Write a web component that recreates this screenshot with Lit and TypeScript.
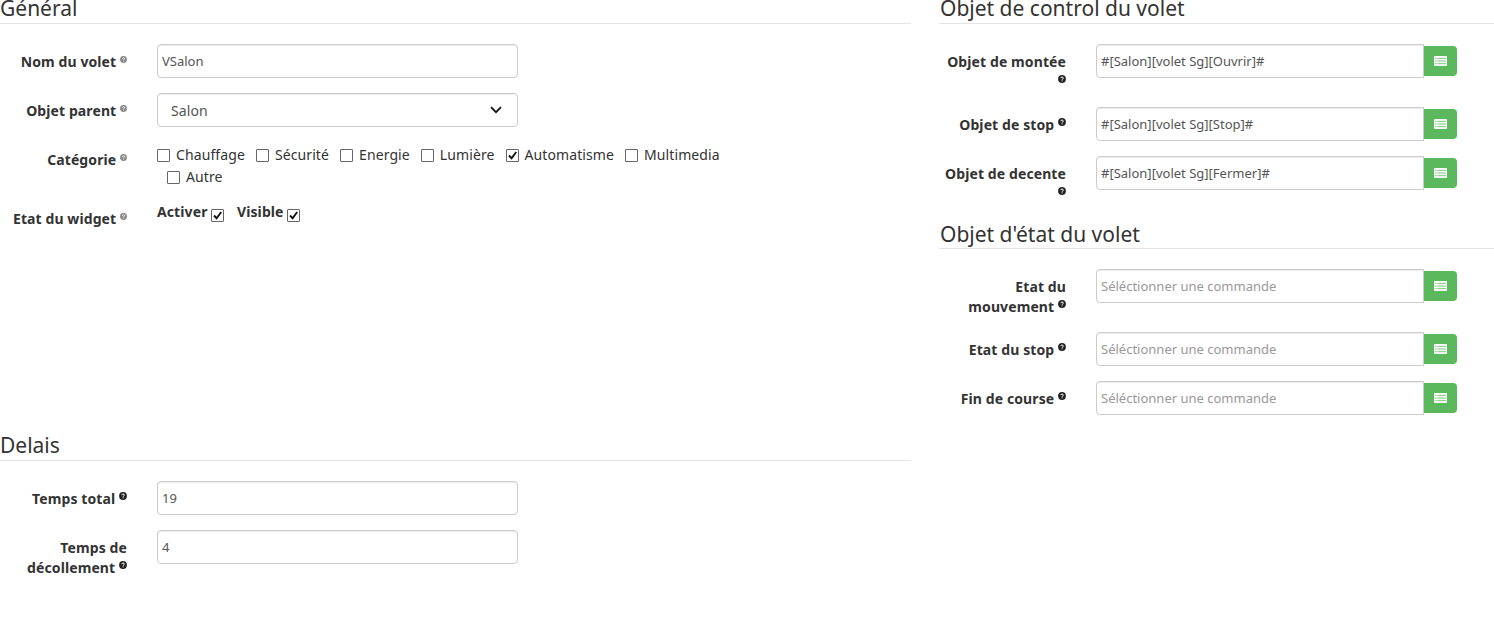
import { LitElement, html, css, svg } from "lit";
import { customElement } from "lit/decorators.js";

const help = (faint = false) => html`<svg class="help ${faint ? "faint" : ""}" viewBox="0 0 16 16" aria-hidden="true">
  <circle cx="8" cy="8" r="7.8" fill="currentColor"></circle>
  ${svg`<path d="M5.4 6.2c.2-1.5 1.3-2.2 2.7-2.2 1.5 0 2.6.9 2.6 2.1 0 1.9-2.5 1.8-2.5 3.5" fill="none" stroke="#fff" stroke-width="2"></path>`}
  <rect x="7.1" y="10.7" width="2" height="2" fill="#fff"></rect>
</svg>`;

const listAlt = html`<svg class="list" viewBox="0 0 13 10" aria-hidden="true">
  <rect width="13" height="10" rx="1" fill="#fff"></rect>
  <g fill="#7cc67c">
    <rect x="1" y="1.8" width="1.6" height="1"></rect>
    <rect x="3.4" y="1.8" width="8.6" height="1"></rect>
    <rect x="1" y="4.5" width="1.6" height="1"></rect>
    <rect x="3.4" y="4.5" width="8.6" height="1"></rect>
    <rect x="1" y="7.2" width="1.6" height="1"></rect>
    <rect x="3.4" y="7.2" width="8.6" height="1"></rect>
  </g>
</svg>`;

@customElement("app-root")
export class AppRoot extends LitElement {
  static styles = css`
    :host {
      display: block;
      width: 1494px;
      height: 620px;
      overflow: hidden;
      background: #fff;
      color: #333;
      font-family: "Noto Sans", "Open Sans", sans-serif;
      font-size: 14px;
      line-height: 20px;
    }
    .page {
      display: grid;
      grid-template-columns: 911px 555px;
      column-gap: 28px;
      margin-top: -7px;
    }
    h2 {
      margin: 0 0 20px;
      height: 30px;
      font-size: 21px;
      line-height: 30px;
      font-weight: 400;
      color: #333;
      border-bottom: 1px solid #e5e5e5;
      box-sizing: content-box;
      white-space: nowrap;
    }
    .right h2 {
      padding-left: 1px;
    }
    .right section + section h2 {
      height: 29px;
    }
    .general {
      height: 437px;
    }
    .row {
      display: grid;
      grid-template-columns: 127px 1fr;
      column-gap: 30px;
      margin-bottom: 15px;
    }
    label.name {
      padding-top: 8px;
      text-align: right;
      font-weight: 700;
      letter-spacing: 0.1px;
    }
    .help {
      display: inline-block;
      width: 8px;
      height: 8px;
      vertical-align: 4px;
      color: #222;
    }
    .help.faint {
      width: 7px;
      height: 7px;
      color: #888;
      vertical-align: 4px;
    }
    input.text,
    select {
      display: block;
      box-sizing: border-box;
      width: 361px;
      height: 34px;
      padding: 6px 4px;
      border: 1px solid #ccc;
      border-radius: 4px;
      background: #fff;
      box-shadow: inset 0 1px 1px rgba(0, 0, 0, 0.075);
      color: #555;
      font: 400 13px/20px "Noto Sans", "Open Sans", sans-serif;
      outline: none;
    }
    input.text::placeholder {
      color: #999;
      opacity: 1;
    }
    select {
      appearance: none;
      padding: 7px 13px 5px;
      font-size: 14px;
      letter-spacing: 0.1px;
      background-image: url("data:image/svg+xml,%3Csvg xmlns='http://www.w3.org/2000/svg' width='12' height='8' viewBox='0 0 12 8'%3E%3Cpath d='M1 1.2l5 5 5-5' fill='none' stroke='%23111' stroke-width='1.8'/%3E%3C/svg%3E");
      background-repeat: no-repeat;
      background-position: right 15px center;
    }
    .group {
      display: flex;
      align-items: flex-start;
    }
    .group input.text {
      width: 328px;
      border-radius: 4px 0 0 4px;
    }
    .btn {
      display: flex;
      align-items: center;
      justify-content: center;
      box-sizing: border-box;
      width: 33px;
      height: 30px;
      margin-top: 2px;
      padding: 0;
      border: none;
      border-radius: 0 4px 4px 0;
      background: #5cb85c;
    }
    .list {
      width: 13px;
      height: 10px;
    }
    .checks {
      width: 600px;
      line-height: 22px;
      margin: 2px 0 -2px;
      letter-spacing: 0.1px;
    }
    .checks label {
      display: inline-block;
      margin-left: 11px;
    }
    .checks label:first-child {
      margin-left: 0;
    }
    .checks label:last-child {
      margin-left: 10px;
    }
    input.check {
      appearance: none;
      box-sizing: border-box;
      width: 13px;
      height: 13px;
      margin: 0 6px 0 0;
      border: 1px solid #666;
      border-radius: 1px;
      background: #fff center / 11px 11px no-repeat;
      vertical-align: -2px;
    }
    input.check:checked {
      background-image: url("data:image/svg+xml,%3Csvg xmlns='http://www.w3.org/2000/svg' width='11' height='11' viewBox='0 0 11 11'%3E%3Cpath d='M2 5.5l2.6 2.7L9.2 2' fill='none' stroke='%23111' stroke-width='1.9'/%3E%3C/svg%3E");
    }
    .widget {
      font-weight: 700;
      line-height: 20px;
      padding-top: 1px;
      letter-spacing: 0.1px;
    }
    .widget label {
      margin-right: 9px;
    }
    .widget input.check {
      margin: 0;
      vertical-align: -5px;
    }
  `;

  private text(label: string, value: string, faint = false) {
    return html`<div class="row">
      <label class="name">${label} ${help(faint)}</label>
      <div><input class="text" .value=${value} /></div>
    </div>`;
  }

  private cmd(label: string, value: string) {
    return html`<div class="row">
      <label class="name">${label} ${help()}</label>
      <div class="group">
        <input class="text" .value=${value} placeholder="Séléctionner une commande" />
        <button class="btn">${listAlt}</button>
      </div>
    </div>`;
  }

  private check(label: string, checked = false) {
    return html`<label><input class="check" type="checkbox" ?checked=${checked} />${label}</label>`;
  }

  render() {
    return html`<div class="page">
      <div class="left">
        <section class="general">
          <h2>Général</h2>
          ${this.text("Nom du volet", "VSalon", true)}
          <div class="row">
            <label class="name">Objet parent ${help(true)}</label>
            <div><select><option>Salon</option></select></div>
          </div>
          <div class="row">
            <label class="name">Catégorie ${help(true)}</label>
            <div class="checks">${this.check("Chauffage")}${this.check("Sécurité")}${this.check("Energie")}${this.check("Lumière")}${this.check("Automatisme", true)}${this.check("Multimedia")}${this.check("Autre")}</div>
          </div>
          <div class="row">
            <label class="name">Etat du widget ${help(true)}</label>
            <div class="widget">
              <label>Activer <input class="check" type="checkbox" checked /></label>
              <label>Visible <input class="check" type="checkbox" checked /></label>
            </div>
          </div>
        </section>
        <section>
          <h2>Delais</h2>
          ${this.text("Temps total", "19")}
          ${this.text("Temps de décollement", "4")}
        </section>
      </div>
      <div class="right">
        <section>
          <h2>Objet de control du volet</h2>
          ${this.cmd("Objet de montée", "#[Salon][volet Sg][Ouvrir]#")}
          ${this.cmd("Objet de stop", "#[Salon][volet Sg][Stop]#")}
          ${this.cmd("Objet de decente", "#[Salon][volet Sg][Fermer]#")}
        </section>
        <section>
          <h2>Objet d'état du volet</h2>
          ${this.cmd("Etat du mouvement", "")}
          ${this.cmd("Etat du stop", "")}
          ${this.cmd("Fin de course", "")}
        </section>
      </div>
    </div>`;
  }
}
